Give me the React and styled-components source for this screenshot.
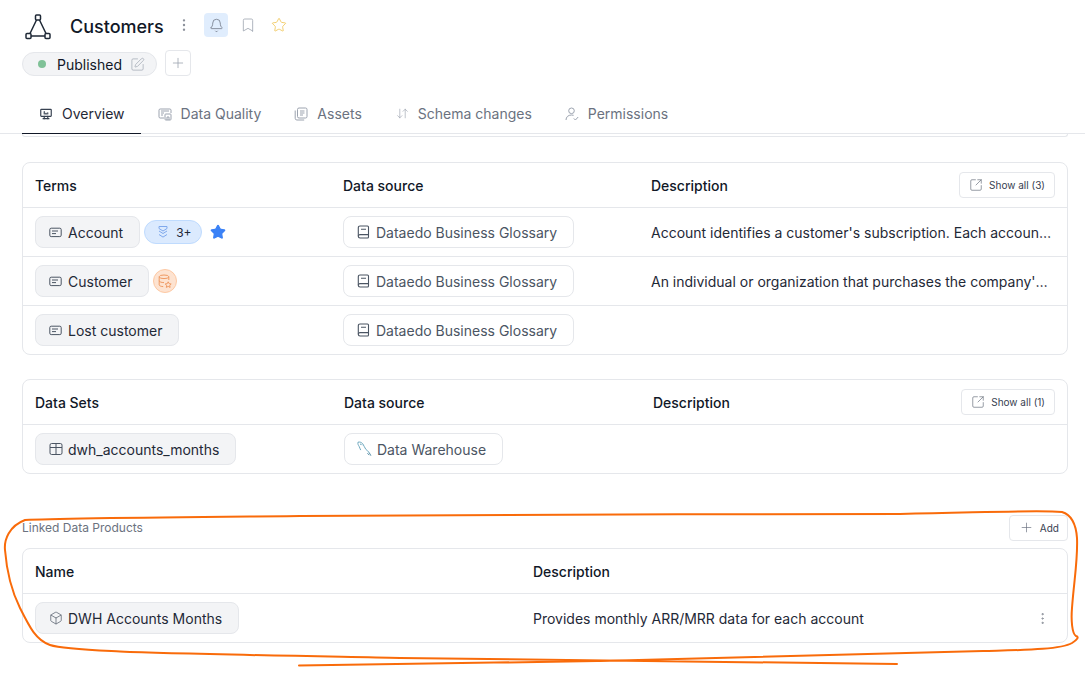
import React from "react";
import styled, { createGlobalStyle } from "styled-components";
import { Bell, Bookmark, Star, SquarePen, Plus, ArrowDownUp, Box, EllipsisVertical, SquareArrowOutUpRight } from "lucide-react";
import { TbDeviceDesktopAnalytics } from "react-icons/tb";

const Global = createGlobalStyle`
  * { box-sizing: border-box; }
  html, body { margin: 0; background: #fff; }
  body { font-family: Inter, "Noto Sans", sans-serif; color: #111827; -webkit-font-smoothing: antialiased; }
`;

const Page = styled.div`
  position: relative;
  width: 1085px;
  height: 682px;
  overflow: hidden;
`;
const Header = styled.header`
  padding: 13px 0 0 22px;
`;
const TitleRow = styled.div`
  display: flex;
  align-items: center;
  height: 24px;
`;
const Logo = styled.svg`
  width: 30px;
  height: 30px;
  margin-left: 1px;
  margin-top: 5px;
  flex: none;
`;
const Title = styled.h1`
  margin: 4px 0 0 17px;
  font-size: 18px;
  line-height: 24px;
  font-weight: 500;
  color: #111827;
  width: 93px;
  white-space: nowrap;
`;
const MoreBox = styled.span`
  display: flex;
  margin-left: 13px;
  width: 16px;
  justify-content: center;
  color: #8b909a;
`;
const IconBox = styled.span`
  width: 24px;
  height: 24px;
  display: flex;
  align-items: center;
  justify-content: center;
  border-radius: 4px;
  margin-left: ${(p) => p.$ml}px;
  background: ${(p) => (p.$active ? "#e0edfd" : "transparent")};
  color: ${(p) => p.$color};
`;
const StatusRow = styled.div`
  display: flex;
  align-items: flex-end;
  gap: 8px;
  margin-top: 13px;
  height: 26px;
`;
const StatusPill = styled.div`
  display: flex;
  align-items: center;
  width: 135px;
  height: 24px;
  padding-left: 15px;
  border: 1px solid #e5e7eb;
  border-radius: 12px;
  background: #f3f4f6;
  font-size: 14px;
  font-weight: 400;
  color: #111827;
`;
const Dot = styled.span`
  width: 8px;
  height: 8px;
  border-radius: 50%;
  background: #7fc197;
  margin-right: 11px;
`;
const PenIcon = styled(SquarePen)`
  margin-left: 8px;
  color: #9ca3af;
`;
const SquareButton = styled.button`
  width: 26px;
  height: 26px;
  padding: 0;
  display: flex;
  align-items: center;
  justify-content: center;
  background: #fff;
  border: 1px solid #e5e7eb;
  border-radius: 4px;
  color: #9ca3af;
`;
const Tabs = styled.nav`
  display: flex;
  height: 34px;
  margin-top: 24px;
  padding-left: 22px;
  border-bottom: 1px solid #e5e7eb;
`;
const Tab = styled.div`
  display: flex;
  align-items: center;
  gap: ${(p) => p.$gap || 9}px;
  height: 34px;
  padding: 0 16px 6px ${(p) => p.$pl || 17}px;
  font-size: 14px;
  white-space: nowrap;
  color: ${(p) => (p.$active ? "#1f2937" : "#6b7280")};
  border-bottom: 1px solid ${(p) => (p.$active ? "#111827" : "transparent")};
  svg { color: ${(p) => (p.$active ? "#374151" : "#9ca3af")}; flex: none; }
`;
const Content = styled.main`
  padding: 0 17px 0 22px;
`;
const ClippedCard = styled.div`
  height: 3px;
  border: 1px solid #e5e7eb;
  border-top: 0;
  border-radius: 0 0 8px 8px;
  margin-bottom: 25px;
`;
const Card = styled.section`
  border: 1px solid #e5e7eb;
  border-radius: 8px;
  background: #fff;
  margin-bottom: ${(p) => p.$mb || 0}px;
`;
const Row = styled.div`
  display: grid;
  grid-template-columns: ${(p) => p.$cols};
  align-items: center;
  height: ${(p) => (p.$head ? 44 : 49)}px;
  padding: 0 12px;
  border-top: ${(p) => (p.$head ? "none" : "1px solid #e5e7eb")};
`;
const HeadCell = styled.div`
  font-size: 14px;
  font-weight: 500;
  color: #111827;
`;
const HeadEnd = styled.div`
  display: flex;
  align-items: center;
  justify-content: space-between;
`;
const SmallButton = styled.button`
  display: flex;
  align-items: center;
  gap: ${(p) => p.$gap || 6}px;
  height: ${(p) => p.$h || 26}px;
  padding: 0 ${(p) => p.$pr || 9}px 0 ${(p) => p.$pl || 9}px;
  background: #fff;
  border: 1px solid #e5e7eb;
  border-radius: 4px;
  font: 400 10px Inter, sans-serif;
  color: #374151;
  white-space: nowrap;
  svg { color: #6b7280; flex: none; }
`;
const Cell = styled.div`
  display: flex;
  align-items: center;
  min-width: 0;
`;
const Chip = styled.div`
  display: flex;
  align-items: center;
  gap: ${(p) => p.$gap || 6}px;
  height: 32px;
  padding: 0 16px 0 ${(p) => p.$pl || 13}px;
  border: 1px solid #e5e7eb;
  border-radius: 8px;
  background: ${(p) => (p.$ghost ? "#fff" : "#f3f4f6")};
  font-size: 14px;
  color: ${(p) => (p.$ghost ? "#4b5563" : "#1f2937")};
  white-space: nowrap;
  svg { color: #4b5563; flex: none; }
`;
const CountBadge = styled.div`
  display: flex;
  align-items: center;
  gap: 7px;
  height: 24px;
  width: 58px;
  margin-left: 4px;
  padding-left: 12px;
  border: 1px solid #bfdbfe;
  border-radius: 12px;
  background: #dbeafe;
  font-size: 12px;
  color: #1f2937;
`;
const RoundBadge = styled.div`
  width: 24px;
  height: 24px;
  margin-left: 4px;
  display: flex;
  align-items: center;
  justify-content: center;
  border: 1px solid #fdc9a4;
  border-radius: 50%;
  background: #fde3d1;
`;
const BlueStar = styled(Star)`
  margin-left: 8px;
  color: #3b82f6;
  fill: #3b82f6;
`;
const DescText = styled.div`
  font-size: 14px;
  color: #1f2937;
  white-space: nowrap;
  overflow: hidden;
  text-overflow: ellipsis;
`;
const SectionHead = styled.div`
  display: flex;
  align-items: center;
  justify-content: space-between;
  height: 25px;
  margin: 41px 0 8px;
`;
const SectionLabel = styled.span`
  font-size: 12px;
  color: #6b7280;
`;
const Spread = styled.div`
  display: flex;
  align-items: center;
  justify-content: space-between;
  padding-right: 5px;
`;
const Kebab = styled(EllipsisVertical)`
  color: #8b909a;
`;
const Annotation = styled.svg`
  position: absolute;
  inset: 0;
  width: 1085px;
  height: 682px;
  pointer-events: none;
`;

const TermIcon = () => (
  <svg width="13" height="13" viewBox="0 0 13 13" fill="none" stroke="currentColor" strokeWidth="1">
    <rect x="0.8" y="2.2" width="11.4" height="8.4" rx="1.4" />
    <path d="M3 5h6M3 7.6h4" />
  </svg>
);
const BookIcon = () => (
  <svg width="13" height="14" viewBox="0 0 13 14" fill="none" stroke="currentColor" strokeWidth="1.1">
    <path d="M3 1h7.5a1 1 0 0 1 1 1v10a1 1 0 0 1-1 1H3a1.7 1.7 0 0 1-1.7-1.7V2.7A1.7 1.7 0 0 1 3 1z" />
    <path d="M1.3 11.3A1.7 1.7 0 0 1 3 9.6h8.5M4 4.2h5" />
  </svg>
);
const TableIcon = () => (
  <svg width="14" height="14" viewBox="0 0 14 14" fill="none" stroke="currentColor" strokeWidth="1">
    <rect x="1" y="1.5" width="12" height="11" rx="1.6" />
    <path d="M1 5.5h12M7 1.5v11" />
  </svg>
);
const QualityIcon = () => (
  <svg width="14" height="14" viewBox="0 0 14 14" fill="none" stroke="currentColor" strokeWidth="1">
    <path d="M6 11H2.2A1.2 1.2 0 0 1 1 9.8V3.2A1.2 1.2 0 0 1 2.2 2h9.6A1.2 1.2 0 0 1 13 3.2V6" />
    <path d="M3 4h8M3 6h3M3 8h2" />
    <rect x="7" y="7" width="6" height="6" rx="0.8" />
    <path d="M9 13v-3h2v3" />
  </svg>
);
const AssetsIcon = () => (
  <svg width="14" height="14" viewBox="0 0 14 14" fill="none" stroke="currentColor" strokeWidth="1">
    <rect x="3.5" y="1" width="9.5" height="10" rx="1.5" />
    <path d="M6 4h4.5M6 6h4.5M6 8h3" />
    <path d="M1.2 3.5v7.8A1.7 1.7 0 0 0 2.9 13h7.3" />
  </svg>
);
const PermIcon = () => (
  <svg width="14" height="14" viewBox="0 0 14 14" fill="none" stroke="currentColor" strokeWidth="1">
    <circle cx="6.5" cy="3.8" r="2.8" />
    <path d="M1 13c0-3 2.2-5 5.5-5 .8 0 1.5.1 2.1.3" />
    <path d="M8.8 11.4l1.6 1.6 2.8-3" />
  </svg>
);
const DeployIcon = () => (
  <svg width="12" height="14" viewBox="0 0 12 14" fill="none" stroke="#7fa8ec" strokeWidth="1">
    <path d="M2 1.5h8v2L6 6 2 3.5z" />
    <path d="M2 6l4 2.5L10 6" />
    <path d="M2 9.5l4 2.6 4-2.6" />
  </svg>
);
const CertifiedIcon = () => (
  <svg width="14" height="14" viewBox="0 0 14 14" fill="none" stroke="#ef9a63" strokeWidth="1">
    <ellipse cx="6" cy="2.8" rx="4.8" ry="1.8" />
    <path d="M1.2 2.8v8c0 1 2 1.8 4 1.8M10.8 2.8V6M1.2 6.8c0 1 2.2 1.8 4.8 1.8" />
    <path d="M10.2 7.8l1 1.9 2 .3-1.5 1.4.4 2-1.9-1-1.9 1 .4-2L7.2 10l2-.3z" />
  </svg>
);
const MySqlIcon = () => (
  <svg width="15" height="17" viewBox="0 0 15 17" fill="none" strokeWidth="0.9">
    <g stroke="#5f9fb8">
      <path d="M1 1.2c1.8-.5 3.6.2 4.8 1.7 1.3 1.6 1.7 3.8 3 5.4 1 1.2 2.4 1.9 3.2 3" />
      <path d="M1 1.2c-.4 1.7.3 2.9 1.1 4.1.7 1.1.8 2.6 1.6 3.8" />
      <path d="M3 3c.8 0 1.4.5 1.9 1.2" />
    </g>
    <path d="M12 11.3l1.9 3.4M10.4 12.4l1.8 1.5" stroke="#3f7f9c" />
  </svg>
);

const termsCols = "308px 308px 1fr";
const setsCols = "309px 309px 1fr";
const linkCols = "498px 1fr";

export default function App() {
  return (
    <Page>
      <Global />
      <Header>
        <TitleRow>
          <Logo viewBox="0 0 30 30" fill="none" stroke="#1f2937" strokeWidth="1.5">
            <rect x="12.5" y="2" width="5" height="5" rx="1" />
            <rect x="3" y="20.5" width="5" height="5" rx="1" />
            <rect x="22" y="20.5" width="5" height="5" rx="1" />
            <path d="M13.5 7L7 20.5M16.5 7l6.5 13.5M8 23h14" />
          </Logo>
          <Title>Customers</Title>
          <MoreBox><EllipsisVertical size={16} strokeWidth={1.6} /></MoreBox>
          <IconBox $ml={12} $active $color="#6b7280"><Bell size={15} strokeWidth={1.2} /></IconBox>
          <IconBox $ml={8} $color="#9ca3af"><Bookmark size={16} strokeWidth={1.2} /></IconBox>
          <IconBox $ml={7} $color="#f0c75e"><Star size={16} strokeWidth={1.3} /></IconBox>
        </TitleRow>
        <StatusRow>
          <StatusPill>
            <Dot />
            Published
            <PenIcon size={15} strokeWidth={1.1} />
          </StatusPill>
          <SquareButton><Plus size={16} strokeWidth={1.2} /></SquareButton>
        </StatusRow>
      </Header>
      <Tabs>
        <Tab $active $pl={17} $gap={9}><TbDeviceDesktopAnalytics size={14} />Overview</Tab>
        <Tab><QualityIcon />Data Quality</Tab>
        <Tab $gap={9}><AssetsIcon />Assets</Tab>
        <Tab $pl={18} $gap={9}><ArrowDownUp size={13} strokeWidth={1.2} />Schema changes</Tab>
        <Tab $gap={9}><PermIcon />Permissions</Tab>
      </Tabs>
      <Content>
        <ClippedCard />
        <Card $mb={24}>
          <Row $head $cols={termsCols}>
            <HeadCell>Terms</HeadCell>
            <HeadCell>Data source</HeadCell>
            <HeadEnd>
              <HeadCell>Description</HeadCell>
              <SmallButton><SquareArrowOutUpRight size={14} strokeWidth={1.2} />Show all (3)</SmallButton>
            </HeadEnd>
          </Row>
          <Row $cols={termsCols}>
            <Cell>
              <Chip><TermIcon />Account</Chip>
              <CountBadge><DeployIcon />3+</CountBadge>
              <BlueStar size={16} />
            </Cell>
            <Cell><Chip $ghost><BookIcon />Dataedo Business Glossary</Chip></Cell>
            <DescText>Account identifies a customer's subscription. Each account represents a single paying entity.</DescText>
          </Row>
          <Row $cols={termsCols}>
            <Cell>
              <Chip><TermIcon />Customer</Chip>
              <RoundBadge><CertifiedIcon /></RoundBadge>
            </Cell>
            <Cell><Chip $ghost><BookIcon />Dataedo Business Glossary</Chip></Cell>
            <DescText>An individual or organization that purchases the company's products or services.</DescText>
          </Row>
          <Row $cols={termsCols}>
            <Cell><Chip><TermIcon />Lost customer</Chip></Cell>
            <Cell><Chip $ghost><BookIcon />Dataedo Business Glossary</Chip></Cell>
            <div />
          </Row>
        </Card>
        <Card>
          <Row $head $cols={setsCols}>
            <HeadCell>Data Sets</HeadCell>
            <HeadCell>Data source</HeadCell>
            <HeadEnd>
              <HeadCell>Description</HeadCell>
              <SmallButton><SquareArrowOutUpRight size={14} strokeWidth={1.2} />Show all (1)</SmallButton>
            </HeadEnd>
          </Row>
          <Row $cols={setsCols}>
            <Cell><Chip $gap={5}><TableIcon />dwh_accounts_months</Chip></Cell>
            <Cell><Chip $ghost $pl={12} $gap={5}><MySqlIcon />Data Warehouse</Chip></Cell>
            <div />
          </Row>
        </Card>
        <SectionHead>
          <SectionLabel>Linked Data Products</SectionLabel>
          <SmallButton $gap={6} $pl={9} $pr={8}><Plus size={15} strokeWidth={1.1} />Add</SmallButton>
        </SectionHead>
        <Card>
          <Row $head $cols={linkCols}>
            <HeadCell>Name</HeadCell>
            <HeadCell>Description</HeadCell>
          </Row>
          <Row $cols={linkCols}>
            <Cell><Chip $gap={5}><Box size={14} strokeWidth={1.2} />DWH Accounts Months</Chip></Cell>
            <Spread>
              <DescText>Provides monthly ARR/MRR data for each account</DescText>
              <Kebab size={15} strokeWidth={1.6} />
            </Spread>
          </Row>
        </Card>
      </Content>
      <Annotation viewBox="0 0 1085 682" fill="none">
        <path
          d="M299 665.5 C 400 664.5 500 663 600 661 C 750 658 900 654 983 651 C 1020 650 1060 650 1072 643 C 1078 639 1079 637 1076 636 C 1072 634 1071 620 1072 608 C 1074 580 1078 560 1077 538 C 1076 524 1072 515 1062 512 C 1040 510 1000 512 900 514 C 700 514 400 515 300 516 C 200 517 60 518 25 520 C 9 526 4 540 5 550 C 7 575 12 592 20 608 C 30 628 36 640 50 645 C 62 649 90 650 120 651.5 C 180 654 300 656 400 658 C 600 661.5 780 663 897 664"
          stroke="#f96b0a"
          strokeWidth="2"
          strokeLinecap="round"
        />
      </Annotation>
    </Page>
  );
}
